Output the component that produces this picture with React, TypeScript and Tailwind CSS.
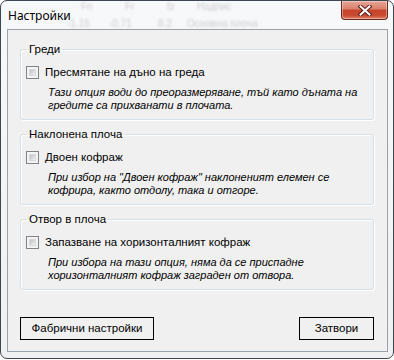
import React from 'react';

function CheckBox() {
    return (
        <span className="w-[13px] h-[13px] shrink-0 border border-[#7f8286] bg-[#f4f4f4] p-[2px] flex">
            <span className="flex-1 bg-[linear-gradient(135deg,#bcc0c6,#f2f2f2)] border border-[#d6d8dc]" />
        </span>
    );
}

function Group({ title, label, lines }: { title: string; label: string; lines: string[] }) {
    return (
        <fieldset className="border border-[#d5dfe5] rounded-[3px] w-[354px] shadow-[inset_1px_1px_0_#fff,1px_1px_0_#fff]">
            <legend className="ml-[6px] px-[2px] text-[11.5px] leading-[15px] text-black">{title}</legend>
            <div className="pt-[7px] pb-[7px]">
                <label className="flex items-center gap-[6px] pl-[5px] h-[16px]">
                    <CheckBox />
                    <span className="text-[11.5px] leading-[16px] text-black">{label}</span>
                </label>
                <div className="mt-[6px] pl-[27px] text-[11px] leading-[13px] italic text-black">
                    {lines.map((l, i) => (
                        <div key={i}>{l}</div>
                    ))}
                </div>
            </div>
        </fieldset>
    );
}

export default function App() {
    return (
        <div className="w-[394px] h-[360px] bg-white font-['Liberation_Sans',Arial,sans-serif]">
            <div className="relative w-[394px] h-[359px] rounded-[7px] border border-[#3e4650] bg-[linear-gradient(180deg,#f7f8f9,#eef0f2)] flex flex-col overflow-hidden">
                {/* blurred content behind the glass frame */}
                <div className="absolute left-0 top-0 w-full h-[28px] text-[10px] leading-[12px] text-[#8a8f96] opacity-40 blur-[1px] pointer-events-none">
                    <span className="absolute left-[80px] top-[0px]">Fn</span>
                    <span className="absolute left-[124px] top-[0px]">Fr</span>
                    <span className="absolute left-[166px] top-[0px]">fz</span>
                    <span className="absolute left-[196px] top-[0px]">Надпис</span>
                    <span className="absolute left-[66px] top-[17px]">-1.15</span>
                    <span className="absolute left-[108px] top-[17px]">-0.71</span>
                    <span className="absolute left-[157px] top-[17px]">8.2</span>
                    <span className="absolute left-[186px] top-[17px]">Основна плоча</span>
                </div>

                <div className="relative h-[28px] flex items-start justify-between">
                    <span className="ml-[7px] mt-[7px] text-[12px] leading-[16px] text-black font-['Noto_Sans',sans-serif]">
                        Настройки
                    </span>
                    <button className="mr-[5px] w-[47px] h-[19px] rounded-b-[4px] border border-t-0 border-[#6b2a20] bg-[linear-gradient(180deg,#e7a597_0%,#d9806b_45%,#c7432c_50%,#c94a31_80%,#e0866a_100%)] shadow-[inset_0_0_0_1px_rgba(255,255,255,0.35)] flex items-center justify-center">
                        <svg width="14" height="11" viewBox="0 0 14 11">
                            <path d="M2.5 1.5 L11.5 9.5 M11.5 1.5 L2.5 9.5" stroke="#5a1e16" strokeWidth="4" strokeLinecap="square" />
                            <path d="M2.5 1.5 L11.5 9.5 M11.5 1.5 L2.5 9.5" stroke="#ffffff" strokeWidth="2" strokeLinecap="square" />
                        </svg>
                    </button>
                </div>

                <div className="ml-[6px] w-[381px] h-[323px] border border-[#9aa2ab] bg-[#f0f0f0] flex flex-col px-[12px] pt-[12px] pb-[11px] gap-[7px]">
                    <Group
                        title="Греди"
                        label="Пресмятане на дъно на греда"
                        lines={[
                            'Тази опция води до преоразмеряване, тъй като дъната на',
                            'гредите са прихванати в плочата.',
                        ]}
                    />
                    <Group
                        title="Наклонена плоча"
                        label="Двоен кофраж"
                        lines={[
                            'При избор на "Двоен кофраж" наклоненият елемен се',
                            'кофрира, както отдолу, така и отгоре.',
                        ]}
                    />
                    <Group
                        title="Отвор в плоча"
                        label="Запазване на хоризонталният кофраж"
                        lines={[
                            'При избора на тази опция, няма да се приспадне',
                            'хоризонталният кофраж заграден от отвора.',
                        ]}
                    />

                    <div className="mt-auto flex justify-between w-[354px]">
                        <button className="w-[134px] h-[23px] border border-black bg-[#f0f0f0] text-[11.5px] text-black">
                            Фабрични настройки
                        </button>
                        <button className="w-[75px] h-[23px] border border-black bg-[#f0f0f0] text-[11.5px] text-black">
                            Затвори
                        </button>
                    </div>
                </div>
            </div>
        </div>
    );
}
